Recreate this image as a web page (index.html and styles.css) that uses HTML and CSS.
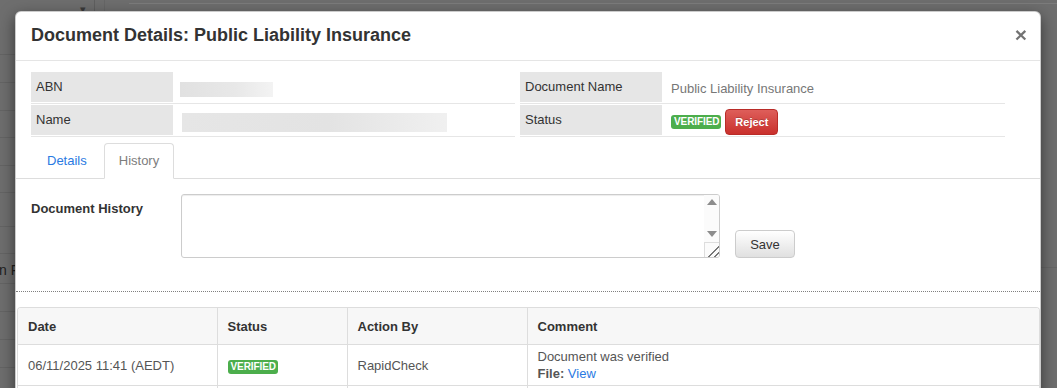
FILE: index.html
```html
<!DOCTYPE html>
<html lang="en">
<head>
    <meta charset="UTF-8">
    <meta name="viewport" content="width=device-width, initial-scale=1.0">
    <meta name="format-detection" content="telephone=no, date=no">
    <title>Document Details</title>
    <link rel="stylesheet" href="styles.css">
</head>
<body>
    <div class="page">
        <div class="page-side">
            <div class="side-head"><span class="caret">&#9662;</span></div>
            <div class="side-row"></div>
            <div class="side-row"></div>
            <div class="side-row short"></div>
            <div class="side-row"></div>
            <div class="side-row short"></div>
            <div class="side-row tall"></div>
            <div class="side-row short"></div>
            <div class="side-row text-row"><span class="side-text">n F</span></div>
            <div class="side-row"></div>
            <div class="side-row"></div>
            <div class="side-row"></div>
        </div>
        <div class="page-gap"></div>
        <div class="page-main">
            <div class="page-rule"></div>
            <div class="page-split"></div>
        </div>
    </div>

    <div class="modal">
        <div class="modal-header">
            <h4 class="modal-title">Document Details: Public Liability Insurance</h4>
            <button class="close" type="button">&times;</button>
        </div>

        <div class="info">
            <div class="info-col">
                <div class="info-row">
                    <div class="info-label">ABN</div>
                    <div class="info-value"><span class="blurred abn"></span></div>
                </div>
                <div class="info-row">
                    <div class="info-label">Name</div>
                    <div class="info-value"><span class="blurred name"></span></div>
                </div>
            </div>
            <div class="info-col">
                <div class="info-row">
                    <div class="info-label">Document Name</div>
                    <div class="info-value muted">Public Liability Insurance</div>
                </div>
                <div class="info-row">
                    <div class="info-label">Status</div>
                    <div class="info-value status">
                        <span class="badge">VERIFIED</span>
                        <button class="btn-reject" type="button">Reject</button>
                    </div>
                </div>
            </div>
        </div>

        <ul class="tabs">
            <li><a href="#">Details</a></li>
            <li class="active"><a href="#">History</a></li>
        </ul>

        <div class="history-form">
            <label class="form-label" for="history">Document History</label>
            <div class="textarea-box">
                <textarea id="history" class="history-input"></textarea>
                <div class="scrollbar">
                    <span class="arrow up"></span>
                    <span class="arrow down"></span>
                    <span class="grip"></span>
                </div>
            </div>
            <button class="btn-save" type="button">Save</button>
        </div>

        <div class="divider"></div>

        <div class="table-wrap">
            <table class="history-table">
                <colgroup>
                    <col class="col-date">
                    <col class="col-status">
                    <col class="col-action">
                    <col>
                </colgroup>
                <thead>
                    <tr>
                        <th>Date</th>
                        <th>Status</th>
                        <th>Action By</th>
                        <th>Comment</th>
                    </tr>
                </thead>
                <tbody>
                    <tr>
                        <td><span class="plain">06/11/2025 <span>11</span>:<span>41</span> (AEDT)</span></td>
                        <td><span class="badge">VERIFIED</span></td>
                        <td>RapidCheck</td>
                        <td>Document was verified<br><strong>File:</strong> <a href="#">View</a></td>
                    </tr>
                    <tr class="empty">
                        <td></td>
                        <td></td>
                        <td></td>
                        <td></td>
                    </tr>
                </tbody>
            </table>
        </div>
    </div>
</body>
</html>
```

FILE: styles.css
```css
html, body {
    height: 388px;
}
body {
    margin: 0;
    overflow: hidden;
    background: #6e6e6e;
    font-family: "Liberation Sans", Arial, sans-serif;
    font-size: 13px;
    color: #333;
}

/* dimmed page behind the dialog */
.page {
    display: flex;
    height: 388px;
}
.page-side {
    width: 94px;
    border-right: 1px solid #5f5f5f;
}
.side-head {
    height: 54px;
    border-bottom: 1px solid #646464;
    padding-left: 80px;
    line-height: 18px;
    color: #3a3a3a;
    font-size: 11px;
}
.side-row {
    height: 27px;
    border-bottom: 1px solid #646464;
    display: flex;
    align-items: center;
}
.side-row.short {
    height: 26px;
}
.side-row.tall {
    height: 33px;
}
.side-row.text-row {
    height: 29px;
}
.side-text {
    font-size: 14px;
    color: #1e1e1e;
    margin-left: -1px;
    margin-top: 2px;
}
.page-gap {
    width: 9px;
    border-right: 1px solid #666;
}
.page-main {
    flex: 1;
    padding-top: 3px;
}
.page-rule {
    margin-left: 24px;
    border-top: 1px solid #7c7c7c;
}
.page-split {
    margin-top: 263px;
    border-top: 1px solid #666;
}

/* dialog */
.modal {
    position: absolute;
    left: 15px;
    top: 11px;
    width: 1026px;
    height: 400px;
    box-sizing: border-box;
    background: #fff;
    border: 1px solid rgba(0, 0, 0, 0.2);
    border-radius: 6px;
    box-shadow: 0 5px 15px rgba(0, 0, 0, 0.5);
    overflow: hidden;
}
.modal-header {
    display: flex;
    justify-content: space-between;
    align-items: center;
    padding: 13px 15px 15px;
    border-bottom: 1px solid #e5e5e5;
}
.modal-title {
    margin: 0;
    font-size: 18px;
    line-height: 20px;
    font-weight: bold;
    color: #333;
}
.close {
    border: 0;
    padding: 0;
    background: none;
    font-family: "Liberation Sans", Arial, sans-serif;
    font-size: 21px;
    font-weight: bold;
    line-height: 20px;
    color: #000;
    opacity: 0.55;
    margin-right: -2px;
}

.info {
    display: grid;
    grid-template-columns: 484px 485px;
    column-gap: 5px;
    padding: 10px 15px 0;
}
.info-row {
    display: flex;
    padding: 1px 0;
    border-bottom: 1px solid #e6e6e6;
}
.info-label {
    width: 142px;
    box-sizing: border-box;
    padding-left: 5px;
    line-height: 30px;
    background: #e6e6e6;
    color: #333;
}
.info-value {
    flex: 1;
    display: flex;
    align-items: center;
    padding-left: 7px;
}
.info-value.muted {
    color: #777;
    padding-left: 9px;
    padding-top: 3px;
}
.info-value.status {
    padding-left: 9px;
    padding-top: 4px;
}
.blurred {
    display: block;
    background: linear-gradient(to right, #e1e1e1, #e8e8e8 60%, #f3f3f3);
    filter: blur(0.6px);
}
.blurred.abn {
    width: 93px;
    height: 15px;
    margin-top: 4px;
}
.blurred.name {
    width: 265px;
    height: 19px;
    margin-left: 2px;
    margin-top: 5px;
    background: linear-gradient(to right, #e6e6e6, #e3e3e3 55%, #f0f0f0);
}

.badge {
    display: inline-block;
    padding: 1px 2px 1px 3px;
    font-size: 10px;
    line-height: 12px;
    font-weight: bold;
    color: #fff;
    background: #4cae4c;
    border-radius: 3px;
    letter-spacing: -0.1px;
}
.btn-reject {
    margin-left: 4px;
    height: 26px;
    padding: 0 9px;
    font-family: "Liberation Sans", Arial, sans-serif;
    font-size: 11px;
    font-weight: bold;
    color: #fff;
    text-shadow: 0 -1px 0 rgba(0, 0, 0, 0.2);
    background: linear-gradient(#de5e5a, #c9302c);
    border: 1px solid #b92c28;
    border-radius: 4px;
}

.tabs {
    list-style: none;
    margin: 6px 0 0;
    padding: 0 0 0 16px;
    display: flex;
    border-bottom: 1px solid #ddd;
}
.tabs li {
    margin-bottom: -1px;
    margin-right: 2px;
}
.tabs a {
    display: block;
    padding: 9px 14px;
    line-height: 16px;
    border: 1px solid transparent;
    border-radius: 4px 4px 0 0;
    color: #2a7ae2;
    text-decoration: none;
}
.tabs .active a {
    color: #7d7d7d;
    background: #fff;
    border-color: #ddd #ddd transparent;
}

.history-form {
    display: flex;
    align-items: flex-end;
    padding: 15px 15px 0;
}
.form-label {
    align-self: flex-start;
    width: 150px;
    padding-top: 7px;
    line-height: 16px;
    font-weight: bold;
}
.textarea-box {
    display: flex;
    width: 539px;
    height: 64px;
    box-sizing: border-box;
    border: 1px solid #ccc;
    border-radius: 3px;
    box-shadow: inset 0 1px 1px rgba(0, 0, 0, 0.075);
    overflow: hidden;
}
.history-input {
    flex: 1;
    margin: 0;
    padding: 6px 10px;
    border: 0;
    outline: none;
    resize: none;
    background: transparent;
    font-family: "Liberation Sans", Arial, sans-serif;
    font-size: 13px;
}
.scrollbar {
    width: 15px;
    display: flex;
    flex-direction: column;
    align-items: center;
    background: #fbfbfb;
}
.arrow {
    width: 0;
    height: 0;
    border-left: 5px solid transparent;
    border-right: 5px solid transparent;
}
.arrow.up {
    margin-top: 4px;
    border-bottom: 6px solid #8c8c8c;
}
.arrow.down {
    margin-top: auto;
    margin-bottom: 5px;
    border-top: 6px solid #8c8c8c;
}
.grip {
    align-self: stretch;
    height: 15px;
    box-sizing: border-box;
    border-top: 1px solid #ddd;
    border-left: 1px solid #ddd;
    background: linear-gradient(135deg, transparent 60%, #777 60%, #777 66%, transparent 66%, transparent 80%, #777 80%, #777 86%, transparent 86%);
}
.btn-save {
    margin-left: 15px;
    width: 60px;
    height: 28px;
    font-family: "Liberation Sans", Arial, sans-serif;
    font-size: 13px;
    color: #333;
    background: linear-gradient(#fff, #e0e0e0);
    border: 1px solid #ccc;
    border-radius: 4px;
}

.divider {
    margin-top: 33px;
    border-top: 1px dotted #808080;
}

.table-wrap {
    margin: 15px 0 0 1px;
    border: 1px solid #ddd;
    border-bottom: 0;
    border-radius: 4px 4px 0 0;
    overflow: hidden;
}
.history-table {
    width: 100%;
    border-collapse: collapse;
    table-layout: fixed;
}
.col-date {
    width: 199px;
}
.col-status {
    width: 130px;
}
.col-action {
    width: 180px;
}
.history-table th {
    height: 36px;
    padding: 0 10px;
    text-align: left;
    font-weight: bold;
    color: #333;
    background: #f7f7f7;
    border-bottom: 1px solid #ddd;
    border-right: 1px solid #ddd;
}
.history-table td {
    height: 34px;
    padding: 3px 10px;
    line-height: 17px;
    color: #555;
    vertical-align: middle;
    border-bottom: 1px solid #ddd;
    border-right: 1px solid #ddd;
}
.history-table th:last-child,
.history-table td:last-child {
    border-right: 0;
}
.history-table .plain,
.history-table .plain span {
    color: #555;
}
.history-table a {
    color: #2a7ae2;
    text-decoration: none;
}
```
